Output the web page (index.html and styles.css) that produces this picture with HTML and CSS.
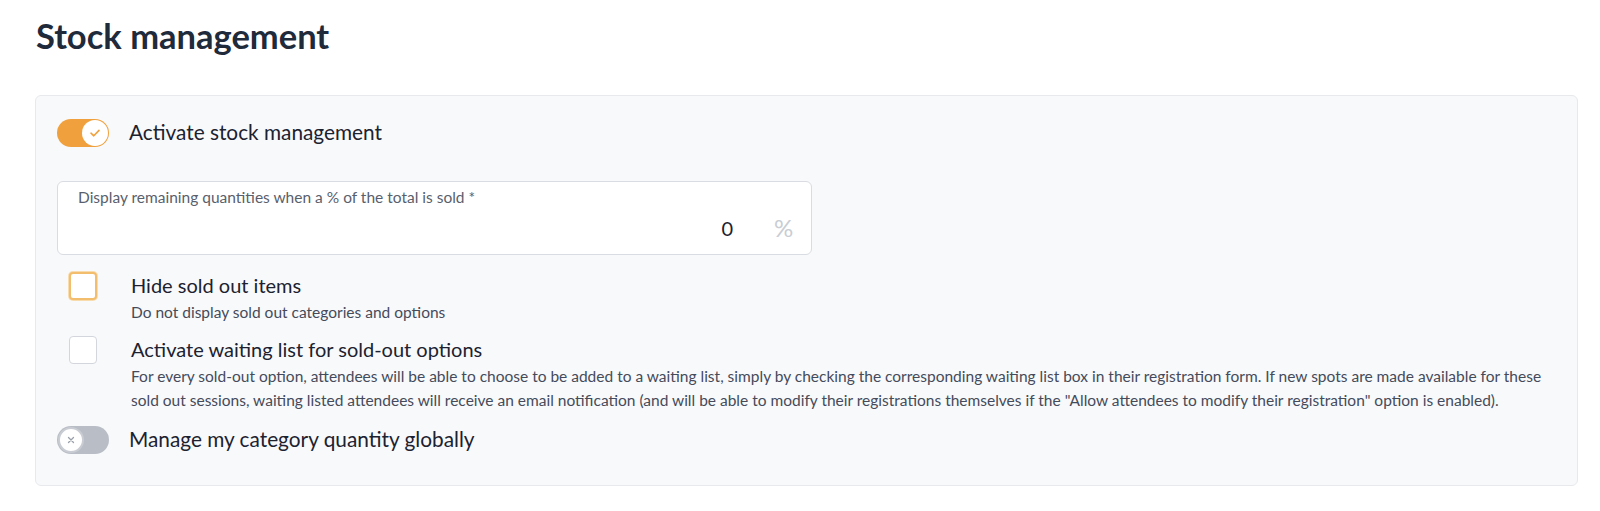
FILE: index.html
```html
<!DOCTYPE html>
<html lang="en">
<head>
<meta charset="utf-8">
<title>Stock management</title>
<link rel="stylesheet" href="styles.css">
</head>
<body>
<main class="page">
  <h1 class="title">Stock management</h1>
  <section class="panel">
    <div class="switch-row">
      <span class="switch switch-on">
        <span class="knob">
          <svg width="12" height="10" viewBox="0 0 12 10"><path d="M2 5.2 L4.8 7.8 L10 2.4" fill="none" stroke="#f0a13e" stroke-width="1.6" stroke-linecap="round" stroke-linejoin="round"/></svg>
        </span>
      </span>
      <span class="switch-label">Activate stock management</span>
    </div>

    <div class="field">
      <div class="field-main">
        <span class="field-label">Display remaining quantities when a % of the total is sold *</span>
        <span class="field-value">0</span>
      </div>
      <div class="field-suffix">%</div>
    </div>

    <div class="option option-first">
      <div class="check-col"><span class="checkbox checkbox-focus"></span></div>
      <div class="option-text">
        <div class="option-title">Hide sold out items</div>
        <div class="option-desc">Do not display sold out categories and options</div>
      </div>
    </div>

    <div class="option">
      <div class="check-col"><span class="checkbox"></span></div>
      <div class="option-text">
        <div class="option-title">Activate waiting list for sold-out options</div>
        <div class="option-desc">For every sold-out option, attendees will be able to choose to be added to a waiting list, simply by checking the corresponding waiting list box in their registration form. If new spots are made available for these sold out sessions, waiting listed attendees will receive an email notification (and will be able to modify their registrations themselves if the "Allow attendees to modify their registration" option is enabled).</div>
      </div>
    </div>

    <div class="switch-row switch-row-last">
      <span class="switch switch-off">
        <span class="knob">
          <svg width="10" height="10" viewBox="0 0 10 10"><path d="M2.5 2.5 L7.5 7.5 M7.5 2.5 L2.5 7.5" fill="none" stroke="#9aa0a9" stroke-width="1.3" stroke-linecap="round"/></svg>
        </span>
      </span>
      <span class="switch-label">Manage my category quantity globally</span>
    </div>
  </section>
</main>
</body>
</html>
```

FILE: styles.css
```css
* { box-sizing: border-box; }

html, body {
  margin: 0;
  background: #ffffff;
  font-family: Lato, "Open Sans", "Liberation Sans", sans-serif;
  color: #1c2230;
}

.page {
  padding: 15px 22px 0 35px;
}

.title {
  margin: 0;
  font-size: 34.5px;
  line-height: 42px;
  font-weight: 700;
  color: #1f2a3b;
  padding-left: 1px;
}

.panel {
  margin-top: 38px;
  background: #f8f9fb;
  border: 1px solid #e7e9ed;
  border-radius: 6px;
  padding: 23px 21px 31px 21px;
}

.switch-row {
  display: flex;
  align-items: center;
  gap: 20px;
  height: 28px;
}

.switch-row-last {
  margin-top: 14px;
}

.switch {
  position: relative;
  width: 52px;
  height: 28px;
  border-radius: 14px;
  flex: none;
}

.switch-on { background: #f0a13e; }
.switch-off { background: #b9bec6; }

.knob {
  position: absolute;
  top: 1px;
  width: 26px;
  height: 26px;
  border-radius: 50%;
  background: #ffffff;
  display: flex;
  align-items: center;
  justify-content: center;
}

.switch-on .knob { right: 1px; }
.switch-off .knob {
  left: 1px;
  border: 2px solid #c9cdd3;
}

.switch-label {
  font-size: 20.8px;
  line-height: 24px;
  padding-bottom: 3px;
  color: #1c2230;
}

.field {
  margin-top: 34px;
  width: 755px;
  height: 74px;
  display: flex;
  background: #ffffff;
  border: 1px solid #d9dce2;
  border-radius: 6px;
}

.field-main {
  flex: 1;
  display: flex;
  flex-direction: column;
  padding: 6px 23px 0 20px;
}

.field-label {
  font-size: 15.5px;
  line-height: 19px;
  color: #595f6c;
}

.field-value {
  margin-top: 9px;
  align-self: flex-end;
  font-size: 20px;
  line-height: 24px;
  color: #1c2230;
}

.field-suffix {
  width: 55px;
  display: flex;
  justify-content: center;
  padding-top: 34px;
  font-size: 24px;
  line-height: 24px;
  color: #c9cdd4;
}

.option {
  display: flex;
  align-items: flex-start;
  gap: 22px;
  margin-top: 11px;
}

.option-first {
  margin-top: 16px;
}

.check-col {
  width: 52px;
  flex: none;
  display: flex;
  justify-content: center;
  padding-top: 1px;
}

.checkbox {
  width: 28px;
  height: 28px;
  background: #ffffff;
  border: 1px solid #d3d6dc;
  border-radius: 4px;
}

.checkbox-focus {
  border: 2px solid #f3bd6e;
  box-shadow: 0 0 0 1px #f9dcae;
}

.option-text {
  flex: 1;
  min-width: 0;
}

.option-title {
  font-size: 20px;
  line-height: 29px;
  color: #1c2230;
}

.option-desc {
  font-size: 15.5px;
  line-height: 24px;
  color: #454b5a;
}
```
